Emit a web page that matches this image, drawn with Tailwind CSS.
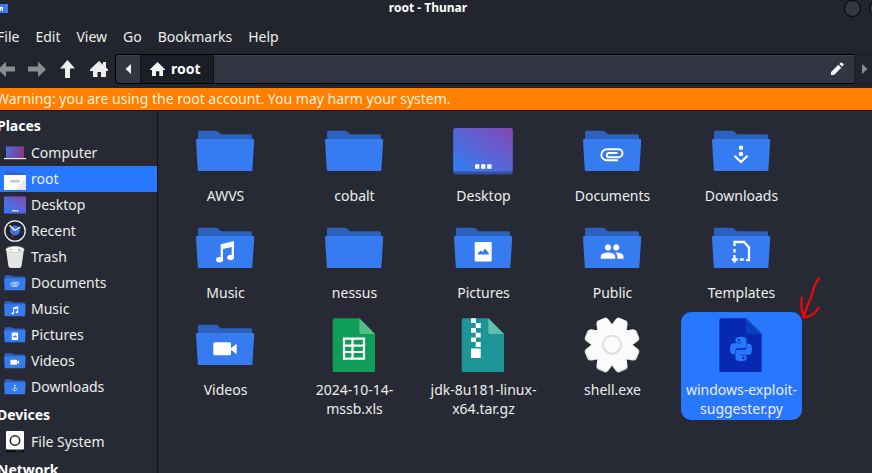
<!DOCTYPE html>
<html lang="en">
<head>
<meta charset="utf-8">
<title>root - Thunar</title>
<script src="https://cdn.jsdelivr.net/npm/@tailwindcss/browser@4"></script>
</head>
<body class="relative flex h-screen flex-col overflow-hidden bg-[#23252e] font-['Noto_Sans',sans-serif] text-sm text-[#eeeeec]">

<!-- shared symbols -->
<svg class="absolute size-0" aria-hidden="true">
  <defs>
    <linearGradient id="screen" x1="0" y1="1" x2="1" y2="0"><stop offset="0.1" stop-color="#367bf0"/><stop offset="1" stop-color="#8547b4"/></linearGradient>
    <linearGradient id="laptop" x1="0" y1="0" x2="1" y2="0.3"><stop offset="0" stop-color="#3f76e6"/><stop offset="1" stop-color="#8c3787"/></linearGradient>
    <symbol id="folder" viewBox="0 0 65 64">
      <path d="M5 10q0-1.300 1.300-1.300H23q1.200 0 2 .8l2.800 2.800H57.500q1.500 0 1.500 1.500V20H5z" fill="#2b62c0"/>
      <path d="M4.200 17H60q1.200 0 1.200 1.200L59.400 48q-.1 1-1.200 1H6q-1.100 0-1.200-1L3 18.200Q3 17 4.200 17z" fill="#367bf0"/>
    </symbol>
    <symbol id="music" viewBox="0 0 65 64"><g fill="#fff"><path d="M27.700 25.200 41 22v17h-2.300V28L30 30v12h-2.300z"/><ellipse cx="26.500" cy="40.800" rx="3.500" ry="2.700"/><ellipse cx="37.600" cy="38.500" rx="3.400" ry="2.700"/></g></symbol>
    <symbol id="clip" viewBox="0 0 65 64"><path d="M38 38.300H26.800a5.500 5.500 0 0 1 0-11H38.500a4 4 0 0 1 0 8H29a2 2 0 0 1 0-4.300h8.500" fill="none" stroke="#fff" stroke-width="1.900"/></symbol>
    <symbol id="photo" viewBox="0 0 65 64"><rect x="23.700" y="23" width="17" height="19.600" rx="1" fill="#fff"/><path d="M27 35.500v-1.500l2.500-2.500 2 1.500 2.500-3.500 3.700 4.500v1.500z" fill="#367bf0"/></symbol>
    <symbol id="people" viewBox="0 0 65 64"><g transform="translate(19.800 20.200) scale(1.030)" fill="#fff"><path d="M16 11c1.660 0 2.990-1.340 2.990-3S17.660 5 16 5s-3 1.340-3 3 1.340 3 3 3zm-8 0c1.660 0 2.990-1.340 2.990-3S9.660 5 8 5 5 6.340 5 8s1.340 3 3 3zm0 2c-2.330 0-7 1.170-7 3.500V19h14v-2.500c0-2.330-4.670-3.500-7-3.500zm8 0c-.29 0-.62.02-.97.05 1.160.84 1.970 1.970 1.970 3.450V19h6v-2.500c0-2.330-4.670-3.500-7-3.500z"/></g></symbol>
    <symbol id="down" viewBox="0 0 65 64"><circle cx="32" cy="25.700" r="2.200" fill="#fff"/><circle cx="32" cy="32" r="2.200" fill="#fff"/><path d="m25.400 33.700 6.600 6.300 6.600-6.300" fill="none" stroke="#fff" stroke-width="2.200"/></symbol>
    <symbol id="template" viewBox="0 0 65 64"><path d="M25.500 27v-4H35l5 5.500V41.200h-3M25.500 30v3.500m0 2.500v7.500M22.800 40.500h6m2 0h4" fill="none" stroke="#fff" stroke-width="2.300"/></symbol>
    <symbol id="video" viewBox="0 0 65 64"><rect x="20.300" y="26.300" width="17.700" height="13" rx="1.500" fill="#fff"/><path d="m37 33 6.700-5.300v10.500z" fill="#fff"/></symbol>
    <symbol id="desktop" viewBox="0 0 65 64"><rect x="2.300" y="6.500" width="59.400" height="46" rx="2" fill="#34509f"/><rect x="2.300" y="6" width="59.400" height="43.500" rx="2" fill="url(#screen)"/><path d="M24 42.300h4.300v4.400H24zm6.100 0h4.300v4.400h-4.300zm6.100 0h4.300v4.400h-4.300z" fill="#fff"/></symbol>
  </defs>
</svg>

<header class="grid h-6 shrink-0 grid-cols-[1fr_auto_1fr] overflow-hidden pr-4">
  <svg class="mt-1 h-[9px] w-2" viewBox="0 0 8 9" aria-hidden="true"><path d="M0 0h8v9H0z" fill="#367bf0"/><path d="M0 3h3v4H2V5H1v2H0z" fill="#fff"/></svg>
  <h1 class="text-xs leading-4 font-bold text-white">root - Thunar</h1>
  <div class="-mr-[30px] flex justify-end gap-2">
    <button aria-label="Minimize" class="size-[17px] rounded-full border border-black bg-[#333642]"></button>
    <button aria-label="Maximize" class="size-[17px] rounded-full border border-black bg-[#333642]"></button>
  </div>
</header>

<nav class="-ml-[3px] flex h-[26px] shrink-0 items-center gap-4" aria-label="Menu">
  <button>File</button><button>Edit</button><button>View</button><button>Go</button><button>Bookmarks</button><button>Help</button>
</nav>

<div class="mt-1 flex h-[30px] shrink-0">
  <div class="flex w-[115px] shrink-0 items-center">
    <button aria-label="Back"><svg class="-ml-1 h-5 w-5" viewBox="0 0 20 20"><path d="M2 10.500 10 2.500v5h9v5h-9v5.500z" fill="#8b8c8f"/></svg></button>
    <button aria-label="Forward" class="ml-[11px]"><svg class="h-5 w-5" viewBox="0 0 20 20"><path d="M19 10.500 11 2.500v5H1v5h10v5.500z" fill="#8b8c8f"/></svg></button>
    <button aria-label="Up" class="ml-[10px]"><svg class="h-5 w-5" viewBox="0 0 20 20"><path d="M10.500 1 18 9.500h-5V19H8V9.500H3z" fill="#eeeeec"/></svg></button>
    <button aria-label="Home" class="ml-3"><svg class="h-5 w-5" viewBox="0 0 20 20"><path d="m10 2 4 3.800V3h3v5.500l2 2V12h-2v6h-5v-5H8.500v5H4v-6H1v-1.500z" fill="#eeeeec"/></svg></button>
  </div>
  <div class="flex min-w-0 flex-1 rounded-l border-y border-l border-black bg-[#333642] shadow-[inset_0_1px_0_#42444f]">
    <button aria-label="Scroll left" class="grid w-6 place-items-center"><svg class="h-3 w-2" viewBox="0 0 8 12"><path d="M7 1v10L1.500 6z" fill="#eeeeec"/></svg></button>
    <button class="flex w-[74px] items-center gap-[6px] border-x border-[#101115] bg-[#1c1e25] pl-[9px] font-bold text-white"><svg class="h-[14px] w-[15px]" viewBox="0 0 15 14"><path d="M7.500 0 15 7.300V8h-2v6H9.300V9.300H6V14H2V8H0v-.7z" fill="#f4f4f2"/></svg>root</button>
    <div class="flex flex-1 items-center justify-end pr-[10px]"><button aria-label="Edit location"><svg class="h-[14px] w-[14px]" viewBox="0 0 14 14"><path d="m1 10 7.300-7.200 3 2.900L4 13H1zM9.300 1.900l1.300-1.200q.8-.6 1.500 0l1.300 1.400q.5.700 0 1.300l-1.200 1.200z" fill="#f4f4f2"/></svg></button></div>
  </div>
  <button aria-label="Scroll right" class="flex w-[18px] items-center justify-end overflow-hidden border-y border-l border-[#191b21] pr-1"><svg class="h-3 w-[6px]" viewBox="0 0 6 12"><path d="M0 1v10l5.500-5z" fill="#8b8c8f"/></svg></button>
</div>

<p class="mt-1 h-[23px] shrink-0 border-b border-[#15161c] bg-[#ff7f00] leading-[22px] whitespace-nowrap text-[#fff0df]"><span class="-ml-1">Warning: you are using the root account. You may harm your system.</span></p>

<div class="flex min-h-0 flex-1 bg-[#272a34]">
  <aside class="w-[158px] shrink-0 overflow-hidden border-r border-[#111218]">
    <h2 class="-ml-[3px] h-[29px] leading-[29px] font-bold text-white">Places</h2>
    <ul>
      <li><a href="#" class="flex h-[26px] items-center gap-[5px] pl-1"><svg class="size-[22px]" viewBox="0 0 22 22"><path d="M2 4.500h18V16H2z" fill="url(#laptop)"/><path d="M0 16h22v1.200H0z" fill="#eee"/></svg>Computer</a></li>
      <li><a href="#" aria-current="page" class="flex h-[26px] items-center gap-[5px] bg-[#2777ff] pl-1"><svg class="size-[22px]" viewBox="0 0 22 22"><path d="M1 3h8l1.500 1.500H21V8H1z" fill="#2b68d5"/><path d="M0 7h22v15H0z" fill="#fff"/><path d="M22 10v12H11z" fill="#e9e9e9"/><rect x="6" y="12" width="10" height="2.500" rx="1.200" fill="#c9c9c9"/></svg>root</a></li>
      <li><a href="#" class="flex h-[26px] items-center gap-[5px] pl-1"><svg class="size-[22px]" viewBox="0 0 22 22"><path d="M0 2.500h22v17H0z" fill="url(#screen)"/><path d="M8 16h1.500v1.500H8zm2.300 0h1.500v1.500h-1.500zm2.300 0h1.500v1.500h-1.500z" fill="#fff"/></svg>Desktop</a></li>
      <li><a href="#" class="flex h-[26px] items-center gap-[5px] pl-1"><svg class="size-[22px]" viewBox="0 0 22 22"><circle cx="11" cy="11" r="10.200" fill="#22252e" stroke="#eee" stroke-width="1.300"/><circle cx="11" cy="10.500" r="5" fill="#367bf0"/><path d="m5.500 5.500 5.500 5 5.500-3.500" fill="none" stroke="#fff" stroke-width="1.300"/><path d="m11 10.500-3 7" stroke="#c8323c"/></svg>Recent</a></li>
      <li><a href="#" class="flex h-[26px] items-center gap-[5px] pl-1"><svg class="size-[22px]" viewBox="0 0 22 22"><path d="m2 3 2.300 16.500Q4.600 22 7 22h8q2.400 0 2.700-2.500L20 3z" fill="#e4e4e2"/><ellipse cx="11" cy="3.500" rx="9" ry="3" fill="#f8f8f8" stroke="#d0d0d0" stroke-width=".8"/><path d="M5 3.500h3" stroke="#e5c25c"/><path d="M14 4h3" stroke="#3f9f95"/></svg>Trash</a></li>
      <li><a href="#" class="flex h-[26px] items-center gap-[5px] pl-1"><svg class="size-[22px]" viewBox="3 0 59 59"><use href="#folder" width="65" height="64"/><use href="#clip" width="65" height="64"/></svg>Documents</a></li>
      <li><a href="#" class="flex h-[26px] items-center gap-[5px] pl-1"><svg class="size-[22px]" viewBox="3 0 59 59"><use href="#folder" width="65" height="64"/><use href="#music" width="65" height="64"/></svg>Music</a></li>
      <li><a href="#" class="flex h-[26px] items-center gap-[5px] pl-1"><svg class="size-[22px]" viewBox="3 0 59 59"><use href="#folder" width="65" height="64"/><use href="#photo" width="65" height="64"/></svg>Pictures</a></li>
      <li><a href="#" class="flex h-[26px] items-center gap-[5px] pl-1"><svg class="size-[22px]" viewBox="3 0 59 59"><use href="#folder" width="65" height="64"/><use href="#video" width="65" height="64"/></svg>Videos</a></li>
      <li><a href="#" class="flex h-[26px] items-center gap-[5px] pl-1"><svg class="size-[22px]" viewBox="3 0 59 59"><use href="#folder" width="65" height="64"/><use href="#down" width="65" height="64"/></svg>Downloads</a></li>
    </ul>
    <h2 class="-ml-[3px] h-[29px] leading-[29px] font-bold text-white">Devices</h2>
    <ul>
      <li><a href="#" class="flex h-[26px] items-center gap-[5px] pl-1"><svg class="size-[22px]" viewBox="0 0 22 22"><rect x="2" y="0" width="18" height="21.500" rx="1" fill="#111"/><rect x="2" y="0" width="18" height="18.500" rx="1" fill="#fff"/><circle cx="11" cy="9.500" r="4.700" fill="none" stroke="#222" stroke-width="1.500"/><path d="M12 20h5" stroke="#666" stroke-dasharray="1 1"/></svg>File System</a></li>
    </ul>
    <h2 class="-ml-[3px] h-[29px] leading-[29px] font-bold text-white">Network</h2>
  </aside>

  <main class="min-w-0 flex-1 overflow-hidden pt-[7px] pl-[7px] text-center leading-[19px]">
    <ul class="grid grid-cols-[repeat(auto-fill,121px)] gap-2">
      <li class="flex flex-col items-center pt-1 pb-[2px]"><svg class="h-16 w-[65px]" viewBox="0 0 65 64"><use href="#folder"/></svg>AWVS</li>
      <li class="flex flex-col items-center pt-1 pb-[2px]"><svg class="h-16 w-[65px]" viewBox="0 0 65 64"><use href="#folder"/></svg>cobalt</li>
      <li class="flex flex-col items-center pt-1 pb-[2px]"><svg class="h-16 w-[65px]" viewBox="0 0 65 64"><use href="#desktop"/></svg>Desktop</li>
      <li class="flex flex-col items-center pt-1 pb-[2px]"><svg class="h-16 w-[65px]" viewBox="0 0 65 64"><use href="#folder"/><use href="#clip"/></svg>Documents</li>
      <li class="flex flex-col items-center pt-1 pb-[2px]"><svg class="h-16 w-[65px]" viewBox="0 0 65 64"><use href="#folder"/><use href="#down"/></svg>Downloads</li>
      <li class="flex flex-col items-center pt-1 pb-[2px]"><svg class="h-16 w-[65px]" viewBox="0 0 65 64"><use href="#folder"/><use href="#music"/></svg>Music</li>
      <li class="flex flex-col items-center pt-1 pb-[2px]"><svg class="h-16 w-[65px]" viewBox="0 0 65 64"><use href="#folder"/></svg>nessus</li>
      <li class="flex flex-col items-center pt-1 pb-[2px]"><svg class="h-16 w-[65px]" viewBox="0 0 65 64"><use href="#folder"/><use href="#photo"/></svg>Pictures</li>
      <li class="flex flex-col items-center pt-1 pb-[2px]"><svg class="h-16 w-[65px]" viewBox="0 0 65 64"><use href="#folder"/><use href="#people"/></svg>Public</li>
      <li class="flex flex-col items-center pt-1 pb-[2px]"><svg class="h-16 w-[65px]" viewBox="0 0 65 64"><use href="#folder"/><use href="#template"/></svg>Templates</li>
      <li class="flex flex-col items-center pt-1 pb-[2px]"><svg class="h-16 w-[65px]" viewBox="0 0 65 64"><use href="#folder"/><use href="#video"/></svg>Videos</li>
      <li class="flex flex-col items-center pt-1 pb-[2px]"><svg class="h-16 w-[65px]" viewBox="0 0 65 64"><path d="M12.500 2.300H37.300L53 18v36.500q0 1.500-1.500 1.500h-39q-1.800 0-1.800-1.500V4q0-1.700 1.800-1.700z" fill="#0f9d58"/><path d="M37.300 2.300 53 18H39q-1.700 0-1.700-1.700z" fill="#57bb8a"/><path d="M22 22.700h20v20H22zM30.500 22.700v20M22 29.700h20M22 36h20" fill="none" stroke="#fff" stroke-width="2.200"/></svg>2024-10-14-<br>mssb.xls</li>
      <li class="flex flex-col items-center pt-1 pb-[2px]"><svg class="h-16 w-[65px]" viewBox="0 0 65 64"><path d="M12.500 2.300H37.300L53 18v36.500q0 1.500-1.500 1.500h-39q-1.800 0-1.800-1.500V4q0-1.700 1.800-1.700z" fill="#1e9698"/><path d="M37.300 2.300 53 18H39q-1.700 0-1.700-1.700z" fill="#5fbfa9"/><path d="M20 2.300h5V7h-5zM24.700 7h5v5h-5zM20 12h5v4.700h-5zM24.700 16.700h5v4.700h-5zM20 21.400h5V26h-5zM24.700 26h5v5h-5zM20 32.400h9.700V42H20z" fill="#fff"/></svg>jdk-8u181-linux-<br>x64.tar.gz</li>
      <li class="flex flex-col items-center pt-1 pb-[2px]"><svg class="h-16 w-[65px]" viewBox="0 0 65 64">
        <defs>
          <path id="tooth" d="M-8.500-17-6.600-24.500Q-5.800-28-3.500-28H3.500Q5.800-28 6.600-24.500L8.500-17z"/>
          <g id="gear"><circle r="20.500"/><use href="#tooth" transform="rotate(22.500)"/><use href="#tooth" transform="rotate(67.500)"/><use href="#tooth" transform="rotate(112.500)"/><use href="#tooth" transform="rotate(157.500)"/><use href="#tooth" transform="rotate(202.500)"/><use href="#tooth" transform="rotate(247.500)"/><use href="#tooth" transform="rotate(292.500)"/><use href="#tooth" transform="rotate(337.500)"/></g>
        </defs>
        <use href="#gear" transform="translate(32 29)" fill="#dededc"/><use href="#gear" transform="translate(32 28.500) scale(.955)" fill="#fbfbfb"/>
        <circle cx="32" cy="28.700" r="9" fill="#fbfbfb" stroke="#dedede" stroke-width="2"/></svg>shell.exe</li>
      <li class="flex flex-col items-center rounded-[10px] bg-[#2777ff] pt-1 pb-[2px]"><svg class="h-16 w-[65px]" viewBox="0 0 65 64"><path d="M12.200 2.300H37L52.700 18v36.500q0 1.500-1.500 1.500h-39q-1.800 0-1.800-1.500V4q0-1.700 1.800-1.700z" fill="#0729b1"/><path d="M37 2.300 52.700 18h-14q-1.700 0-1.700-1.700z" fill="#0a40b8"/>
        <g transform="translate(32 33)" fill="#2777ff"><g id="snake"><path fill-rule="evenodd" d="M-5.500-6.500V-9.500Q-5.500-12.200 0-12.200T5.500-9.500V-3.500Q5.500-.8 2.700-.8H-2.700Q-5.700-.8-5.700 2.500V5.300H-8Q-11 5.300-11 0T-8-5.700H.3V-6.500zM-2.300-10.200a1.200 1.200 0 1 0 .1 0z"/></g><use href="#snake" transform="rotate(180)"/></g></svg>windows-exploit-<br>suggester.py</li>
    </ul>
  </main>
</div>

<!-- hand-drawn arrow over the file grid -->
<svg class="pointer-events-none absolute top-[274px] left-[796px] h-12 w-7" viewBox="0 0 28 48" fill="none" stroke="#f5060c" stroke-width="2.200" stroke-linecap="round" stroke-linejoin="round" aria-hidden="true"><path d="M23 4.500Q19 9 17 17T12 30Q9 37 8 43.500M5.500 23.500V34L7.500 43.500M22.500 33.500Q18 42.500 7.500 43.500"/></svg>
</body>
</html>
